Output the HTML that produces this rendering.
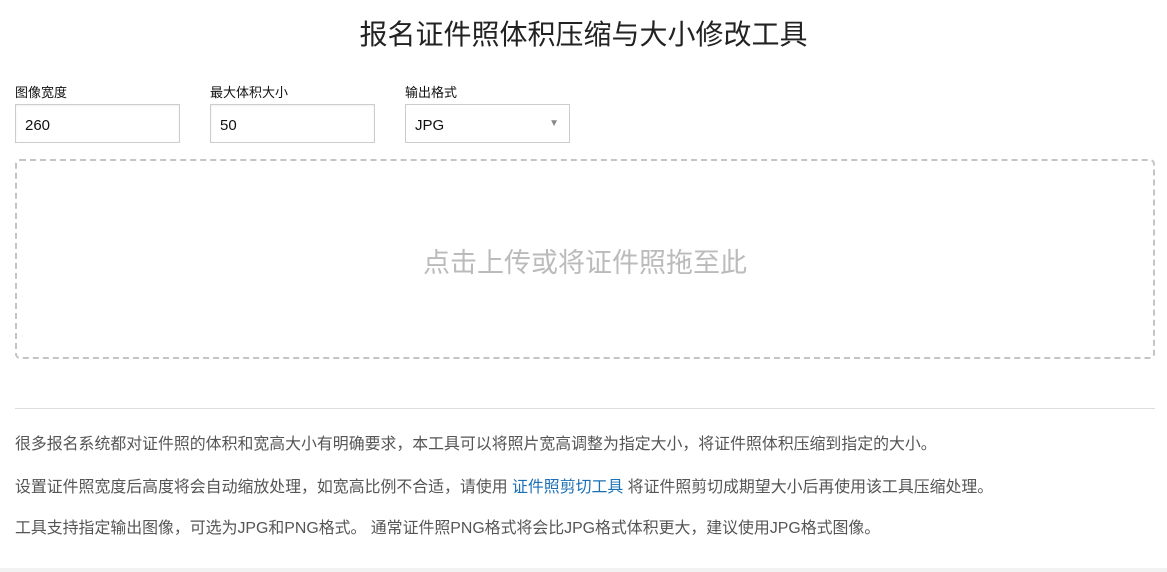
<!DOCTYPE html><html><head><meta charset="utf-8"><style>
body{margin:0;width:1167px;height:572px;background:#fff;font-family:"Liberation Sans","Noto Sans CJK SC",sans-serif;position:relative;overflow:hidden;color:#333}
.a{position:absolute}
h1{position:absolute;left:0;width:1167px;top:15px;margin:0;text-align:center;font-weight:normal;font-size:28px;line-height:40px;color:#222}
.l{font-size:13px;line-height:16px;top:85px;color:#111}
.i{top:104px;height:37px;border:1px solid #ccc;font-size:15px;line-height:41px;box-sizing:content-box;padding-left:9px;width:154px;color:#111;box-shadow:inset 0 1px 2px rgba(0,0,0,.06)}
.p{left:15px;font-size:15.9px;line-height:20px;color:#555;white-space:nowrap}
</style></head><body>
<h1>报名证件照体积压缩与大小修改工具</h1>
<div class="a l" style="left:15px">图像宽度</div>
<div class="a l" style="left:210px">最大体积大小</div>
<div class="a l" style="left:405px">输出格式</div>
<div class="a i" style="left:15px">260</div>
<div class="a i" style="left:210px">50</div>
<div class="a i" style="left:405px;box-shadow:none">JPG<span style="position:absolute;right:10px;top:-2px;font-size:10px;color:#888">▼</span></div>
<div class="a" style="left:15px;top:159px;width:1136px;height:196px;border:2px dashed #c4c4c4;border-radius:5px;text-align:center;line-height:204px;font-size:27px;color:#bbb">点击上传或将证件照拖至此</div>
<div class="a" style="left:15px;top:408px;width:1140px;height:1px;background:#ddd"></div>
<div class="a p" style="top:435px">很多报名系统都对证件照的体积和宽高大小有明确要求，本工具可以将照片宽高调整为指定大小，将证件照体积压缩到指定的大小。</div>
<div class="a p" style="top:478px">设置证件照宽度后高度将会自动缩放处理，如宽高比例不合适，请使用 <span style="color:#1a6fb5">证件照剪切工具</span> 将证件照剪切成期望大小后再使用该工具压缩处理。</div>
<div class="a p" style="top:519px">工具支持指定输出图像，可选为JPG和PNG格式。 通常证件照PNG格式将会比JPG格式体积更大，建议使用JPG格式图像。</div>
<div class="a" style="left:0;top:568px;width:1167px;height:4px;background:#f2f2f2"></div>
</body></html>
